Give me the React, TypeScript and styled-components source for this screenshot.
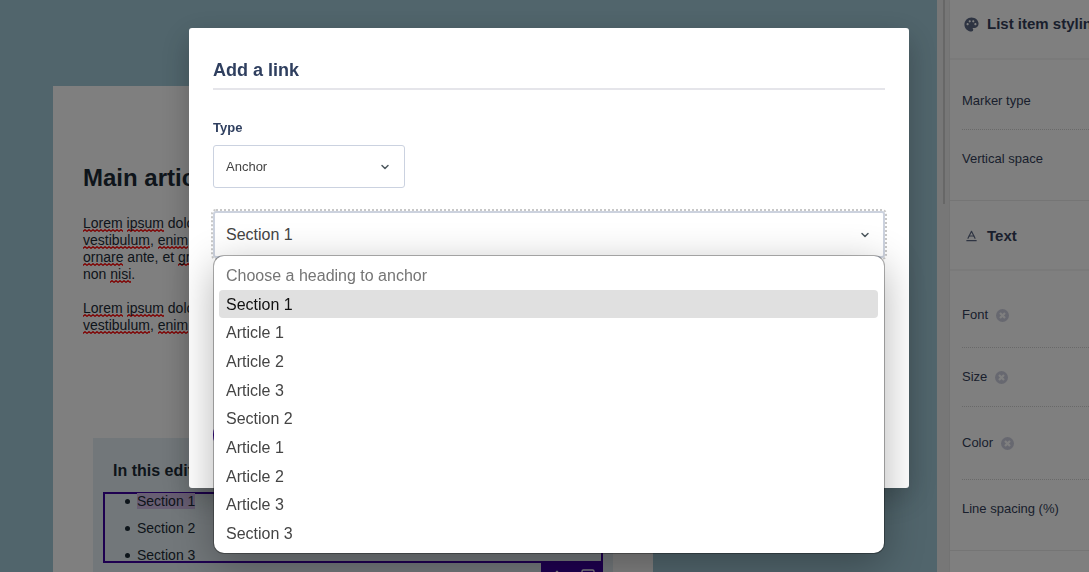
import React, { useState } from 'react';
import styled, { createGlobalStyle, css } from 'styled-components';
import { MdPalette } from 'react-icons/md';
import { ArrowUp, Baseline, ChevronDown, Square } from 'lucide-react';

const GlobalStyle = createGlobalStyle`
  *, *::before, *::after { box-sizing: border-box; }
  body {
    margin: 0;
    overflow: hidden;
    font-family: "Liberation Sans", Arial, sans-serif;
  }
`;

const Layout = styled.div`
  display: flex;
  height: 100vh;
  overflow: hidden;
`;

const Workspace = styled.main`
  flex: 1;
  min-width: 0;
  padding: 86px 53px 0;
  overflow: hidden;
  background: #a2cbd9;
`;

const Sheet = styled.article`
  width: 600px;
  min-height: 100%;
  padding: 77px 40px 0 30px;
  background: #fff;
  color: #1d2b36;
`;

const SheetTitle = styled.h1`
  margin: 0 0 22px;
  font-size: 24px;
  line-height: 30px;
`;

const Paragraph = styled.p`
  margin: 0 0 17px;
  font-size: 14px;
  line-height: 17px;
  white-space: nowrap;
`;

const squiggle = encodeURIComponent(
  '<svg xmlns="http://www.w3.org/2000/svg" width="4" height="3"><path d="M-1 1.5 L0 2.3 L2 .7 L4 2.3 L5 1.5" fill="none" stroke="#f00" stroke-width="1.3"/></svg>',
);

const Misspelt = styled.span`
  padding-bottom: 1px;
  background: url("data:image/svg+xml,${squiggle}") left bottom repeat-x;
`;

const Contents = styled.section`
  width: 520px;
  height: 180px;
  margin: 104px 0 0 10px;
  padding: 23px 10px 0;
  background: #e4eff5;
`;

const ContentsTitle = styled.h2`
  margin: 0 0 11px;
  padding: 0 10px;
  font-size: 16px;
  line-height: 20px;
`;

const SelectedBlock = styled.div`
  position: relative;
  padding-top: 1px;
  box-shadow: inset 0 0 0 2px #3c00a0;
`;

const ContentsList = styled.ul`
  display: grid;
  gap: 11px;
  margin: 0;
  padding: 0 0 0 22px;
  font-size: 14px;
  line-height: 16px;
  list-style: none;
`;

const ContentsItem = styled.li`
  display: flex;
  align-items: center;
  gap: 7px;

  &::before {
    content: '';
    width: 5px;
    height: 5px;
    border-radius: 50%;
    background: currentColor;
  }
`;

const Highlighted = styled.mark`
  background: #d0bce6;
  color: inherit;
`;

const BlockActions = styled.div`
  position: absolute;
  top: calc(100% - 2px);
  right: 0;
  display: flex;
  justify-content: space-around;
  width: 62px;
  padding: 7px 0;
  background: #3c00a0;
`;

const BlockAction = styled.button`
  padding: 0;
  border: 0;
  background: none;
  color: #fff;
`;

const Panel = styled.aside`
  flex: 0 0 152px;
  display: flex;
  overflow: hidden;
  background: #efefef;
  color: #343e5a;
`;

const PanelGutter = styled.div`
  flex: 0 0 13px;
  padding-left: 6px;
`;

const ScrollThumb = styled.div`
  width: 2px;
  height: 204px;
  background: #cfcfcf;
`;

const PanelBody = styled.div`
  flex: 1;
  min-width: 0;
  background: #fff;
  box-shadow: 0 0 2px rgba(0, 0, 0, 0.1);
  white-space: nowrap;
`;

const PanelHeader = styled.h3<{ $scrolled?: boolean }>`
  display: flex;
  align-items: center;
  gap: 7px;
  height: ${(p) => (p.$scrolled ? 60 : 70)}px;
  margin: 0;
  padding: 2px 0 ${(p) => (p.$scrolled ? 12 : 0)}px 13px;
  border-bottom: 2px solid #f4f4f4;
  font-size: 15px;
  line-height: 20px;

  svg { flex: 0 0 17px; color: #5c6884; }
`;

const PanelRows = styled.div`
  padding: 12px 0 12px 12px;
  border-bottom: 1px solid #ebebeb;
`;

const PanelRow = styled.div<{ $height: number }>`
  display: flex;
  align-items: center;
  gap: 8px;
  height: ${(p) => p.$height}px;
  font-size: 13px;
  line-height: 16px;

  & + & { border-top: 1px dotted #d2d2d2; }
`;

const ResetButton = styled.button`
  display: flex;
  padding: 0;
  border: 0;
  background: none;
  color: #cfd1e0;
`;

const Overlay = styled.div`
  position: fixed;
  inset: 0;
  display: flex;
  justify-content: center;
  align-items: flex-start;
  padding: 28px 0 0 9px;
  background: rgba(0, 0, 0, 0.5);
`;

const Dialog = styled.form`
  width: 720px;
  max-width: 100%;
  min-height: 460px;
  padding: 24px;
  border-radius: 3px;
  background: #fff;
  box-shadow: 0 10px 30px rgba(0, 0, 0, 0.25);
  color: #2f3f5f;
`;

const DialogTitle = styled.h2`
  margin: 0 0 29px;
  padding: 6px 0;
  border-bottom: 2px solid #e5e5ea;
  font-size: 18px;
  line-height: 24px;
`;

const FieldLabel = styled.label`
  display: block;
  margin-bottom: 9px;
  font-size: 13px;
  font-weight: 700;
  line-height: 17px;
`;

const SelectWrap = styled.div<{ $width: string }>`
  position: relative;
  width: ${(p) => p.$width};

  > svg {
    position: absolute;
    top: 50%;
    right: 14px;
    transform: translateY(-50%);
    color: #4f5a60;
    pointer-events: none;
  }
`;

const fieldFace = css`
  display: block;
  width: 100%;
  padding: 0 12px;
  appearance: none;
  border-radius: 3px;
  background: #fff;
  color: #444;
  font-family: inherit;
  text-align: left;
`;

const TypeSelect = styled.select`
  ${fieldFace}
  height: 43px;
  border: 1px solid #cbd2e0;
  font-size: 13px;
`;

const HeadingButton = styled.button`
  ${fieldFace}
  height: 47px;
  border: 2px solid #ccd2de;
  padding: 0 11px;
  outline: 2px dotted #c8c8c8;
  font-size: 16px;
`;

const AnchorField = styled.div`
  margin-top: 23px;
`;

const Options = styled.ul`
  position: absolute;
  top: 45px;
  left: 1px;
  right: 1px;
  z-index: 1;
  display: grid;
  grid-auto-rows: 1fr;
  height: 297px;
  margin: 0;
  padding: 5px 6px 5px 5px;
  border-radius: 10px;
  background: #fff;
  box-shadow: 0 0 0 1px rgba(0, 0, 0, 0.3), 0 10px 40px rgba(0, 0, 0, 0.3);
  list-style: none;
`;

const Option = styled.li<{ $active: boolean; $muted: boolean }>`
  display: flex;
  align-items: center;
  padding: 1px 7px 0;
  border-radius: 4px;
  background: ${(p) => (p.$active ? '#e0e0e0' : 'transparent')};
  color: ${(p) => (p.$active ? '#111' : p.$muted ? '#757575' : '#444')};
  font-size: 16px;
  line-height: 20px;
`;

const SaveButton = styled.button`
  width: 110px;
  height: 40px;
  margin-top: 157px;
  border: 0;
  border-radius: 20px;
  background: #3c00a0;
`;

function ResetIcon() {
  return (
    <svg width="13" height="13" viewBox="0 0 13 13" aria-hidden="true">
      <circle cx="6.5" cy="6.5" r="6.5" fill="currentColor" />
      <path d="M4 4l5 5M9 4l-5 5" stroke="#fff" strokeWidth="2.2" />
    </svg>
  );
}

const headings = [
  'Choose a heading to anchor',
  'Section 1',
  'Article 1',
  'Article 2',
  'Article 3',
  'Section 2',
  'Article 1',
  'Article 2',
  'Article 3',
  'Section 3',
];

const textRows = [
  { label: 'Font', height: 64, reset: true },
  { label: 'Size', height: 59, reset: true },
  { label: 'Color', height: 73, reset: true },
  { label: 'Line spacing (%)', height: 59, reset: false },
];

export default function App() {
  const [selected, setSelected] = useState(1);

  return (
    <>
      <GlobalStyle />
      <Layout>
        <Workspace>
          <Sheet>
            <SheetTitle>Main article</SheetTitle>
            <Paragraph>
              <Misspelt>Lorem</Misspelt> <Misspelt>ipsum</Misspelt> dolor sit
              <br />
              <Misspelt>vestibulum</Misspelt>, <Misspelt>enim</Misspelt>
              <br />
              <Misspelt>ornare</Misspelt> ante, et <Misspelt>gravida</Misspelt>
              <br />
              non <Misspelt>nisi</Misspelt>.
            </Paragraph>
            <Paragraph>
              <Misspelt>Lorem</Misspelt> <Misspelt>ipsum</Misspelt> dolor sit
              <br />
              <Misspelt>vestibulum</Misspelt>, <Misspelt>enim</Misspelt>
            </Paragraph>
            <Contents>
              <ContentsTitle>In this edition</ContentsTitle>
              <SelectedBlock>
                <ContentsList>
                  <ContentsItem><Highlighted>Section 1</Highlighted></ContentsItem>
                  <ContentsItem>Section 2</ContentsItem>
                  <ContentsItem>Section 3</ContentsItem>
                </ContentsList>
                <BlockActions>
                  <BlockAction type="button" aria-label="Move up"><ArrowUp size={16} /></BlockAction>
                  <BlockAction type="button" aria-label="Select"><Square size={16} /></BlockAction>
                </BlockActions>
              </SelectedBlock>
            </Contents>
          </Sheet>
        </Workspace>

        <Panel>
          <PanelGutter><ScrollThumb /></PanelGutter>
          <PanelBody>
            <PanelHeader $scrolled><MdPalette size={17} />List item styling</PanelHeader>
            <PanelRows>
              <PanelRow $height={57}>Marker type</PanelRow>
              <PanelRow $height={59}>Vertical space</PanelRow>
            </PanelRows>
            <PanelHeader><Baseline size={14} strokeWidth={2} />Text</PanelHeader>
            <PanelRows>
              {textRows.map((row) => (
                <PanelRow key={row.label} $height={row.height}>
                  {row.label}
                  {row.reset && (
                    <ResetButton type="button" aria-label={`Reset ${row.label}`}>
                      <ResetIcon />
                    </ResetButton>
                  )}
                </PanelRow>
              ))}
            </PanelRows>
          </PanelBody>
        </Panel>
      </Layout>

      <Overlay>
        <Dialog role="dialog" aria-labelledby="dialog-title">
          <DialogTitle id="dialog-title">Add a link</DialogTitle>
          <FieldLabel htmlFor="link-type">Type</FieldLabel>
          <SelectWrap $width="192px">
            <TypeSelect id="link-type" defaultValue="Anchor">
              <option>Anchor</option>
            </TypeSelect>
            <ChevronDown size={12} strokeWidth={3} />
          </SelectWrap>
          <AnchorField>
            <SelectWrap $width="100%">
              <HeadingButton type="button" aria-haspopup="listbox" aria-expanded="true">
                {headings[selected]}
              </HeadingButton>
              <ChevronDown size={12} strokeWidth={3} />
              <Options role="listbox" aria-label="Heading">
                {headings.map((heading, index) => (
                  <Option
                    key={index}
                    role="option"
                    aria-selected={index === selected}
                    $active={index === selected}
                    $muted={index === 0}
                    onClick={() => setSelected(index)}
                  >
                    {heading}
                  </Option>
                ))}
              </Options>
            </SelectWrap>
          </AnchorField>
          <SaveButton type="submit" aria-label="Save" />
        </Dialog>
      </Overlay>
    </>
  );
}
